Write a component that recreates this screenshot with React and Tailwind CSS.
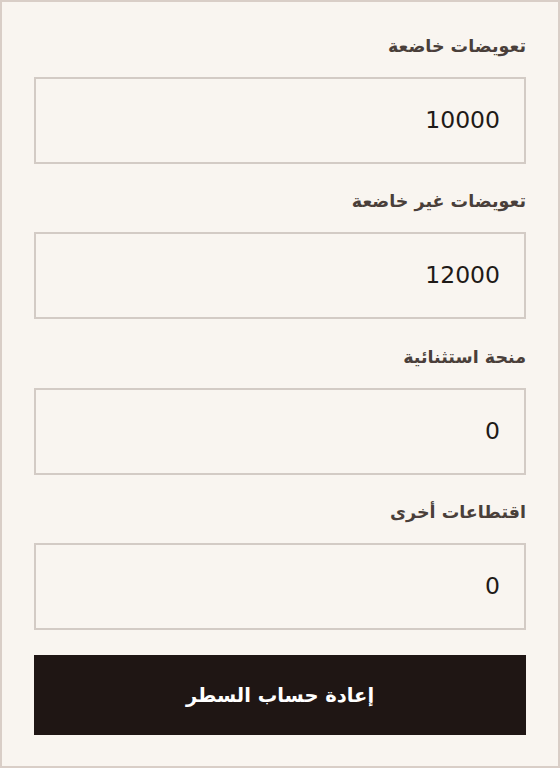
import React from "react";

const fields = [
  { label: "تعويضات خاضعة", value: "10000" },
  { label: "تعويضات غير خاضعة", value: "12000" },
  { label: "منحة استثنائية", value: "0" },
  { label: "اقتطاعات أخرى", value: "0" },
];

export default function App() {
  return (
    <div
      dir="rtl"
      className="w-[560px] h-[768px] bg-[#f9f5f0] border-2 border-[#d9cec7] px-[32px] pt-[33px] flex flex-col"
      style={{ fontFamily: '"DejaVu Sans", sans-serif' }}
    >
      {fields.map((f, i) => (
        <div key={i} className="flex flex-col mb-[26.33px]">
          <label className="text-[17.5px] leading-[22px] font-bold text-[#4a3f3a] mb-[20px]">
            {f.label}
          </label>
          <div className="h-[87px] border-2 border-[#d3cbc5] flex items-center pr-[24px] text-[23.5px] text-[#1f1a17]">
            {f.value}
          </div>
        </div>
      ))}
      <button className="h-[80px] -mt-px bg-[#1f1614] text-white font-bold text-[19.5px] flex items-center justify-center">
        إعادة حساب السطر
      </button>
    </div>
  );
}
